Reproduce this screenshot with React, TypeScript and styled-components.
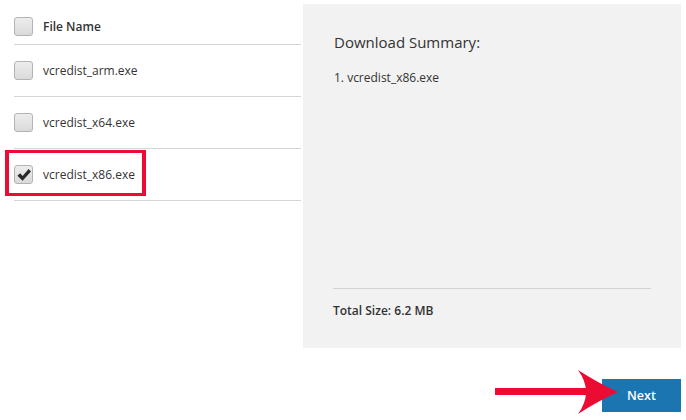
import styled, { createGlobalStyle } from "styled-components";

const GlobalStyle = createGlobalStyle`
    body {
        margin: 0;
        background: #ffffff;
        font-family: "Open Sans", "Noto Sans", sans-serif;
        color: #333333;
    }
`;

const Page = styled.div`
    width: 686px;
    height: 420px;
    box-sizing: border-box;
    padding: 4px 5px 0 14px;
    display: flex;
    flex-direction: column;
`;
const Top = styled.div`
    display: grid;
    grid-template-columns: 287px 378px;
    column-gap: 2px;
    height: 344px;
`;
const List = styled.div`
    display: flex;
    flex-direction: column;
    padding-top: 4px;
`;
const Row = styled.label<{ $header?: boolean }>`
    position: relative;
    display: flex;
    align-items: center;
    gap: 10px;
    height: ${(p) => (p.$header ? "36px" : "51px")};
    border-bottom: 1px solid #d6d6d6;
    font-size: 12px;
    font-weight: ${(p) => (p.$header ? 600 : 400)};
    color: #333333;
`;
const Box = styled.span`
    width: 19px;
    height: 19px;
    box-sizing: border-box;
    border: 1px solid #b3b3b3;
    border-radius: 3px;
    background: linear-gradient(#ededed, #dadada);
    display: flex;
    align-items: center;
    justify-content: center;
    svg {
        width: 16px;
        height: 16px;
    }
`;
const Highlight = styled.span`
    position: absolute;
    left: -9px;
    top: 1px;
    width: 141px;
    height: 46px;
    box-sizing: border-box;
    border: 4px solid #ec0b33;
    border-top-width: 3px;
    border-bottom-width: 3px;
    pointer-events: none;
`;
const Summary = styled.div`
    background: #f2f2f2;
    display: flex;
    flex-direction: column;
    padding: 27px 30px 29px 31px;
    box-sizing: border-box;
`;
const Title = styled.div`
    font-size: 15px;
    line-height: 22px;
`;
const Item = styled.div`
    font-size: 12px;
    margin-top: 16px;
`;
const Divider = styled.div`
    margin-top: auto;
    border-top: 1px solid #d4d4d4;
    margin-left: -1px;
`;
const Total = styled.div`
    font-size: 12px;
    font-weight: 600;
    margin-top: 13px;
    margin-left: -1px;
`;
const Footer = styled.div`
    position: relative;
    display: flex;
    justify-content: flex-end;
    margin-top: 31px;
`;
const NextButton = styled.button`
    width: 79px;
    height: 33px;
    border: none;
    background: #1a75b0;
    color: #ffffff;
    font-family: "Open Sans", "Noto Sans", sans-serif;
    font-size: 12.5px;
    font-weight: 600;
    cursor: pointer;
`;
const Arrow = styled.svg`
    position: absolute;
    right: 61px;
    top: -14px;
    width: 130px;
    height: 55px;
    pointer-events: none;
`;

const files = [
    { name: "vcredist_arm.exe", checked: false },
    { name: "vcredist_x64.exe", checked: false },
    { name: "vcredist_x86.exe", checked: true },
];

function Check({ on }: { on: boolean }) {
    return (
        <Box>
            {on ? (
                <svg viewBox="0 0 16 16">
                    <path d="M1.4 8.8 L4.2 6.2 L6.6 9 L12.6 2 L15 4.4 L6.6 13.8 Z" fill="#2a2a2a" />
                </svg>
            ) : null}
        </Box>
    );
}

export default function App() {
    return (
        <Page>
            <GlobalStyle />
            <Top>
                <List>
                    <Row $header>
                        <Check on={false} />
                        File Name
                    </Row>
                    {files.map((f) => (
                        <Row key={f.name}>
                            <Check on={f.checked} />
                            {f.name}
                            {f.checked ? <Highlight /> : null}
                        </Row>
                    ))}
                </List>
                <Summary>
                    <Title>Download Summary:</Title>
                    <Item>1. vcredist_x86.exe</Item>
                    <Divider />
                    <Total>Total Size: 6.2 MB</Total>
                </Summary>
            </Top>
            <Footer>
                <Arrow viewBox="0 0 130 55">
                    <rect x="5" y="23" width="92" height="7" fill="#ec0b33" />
                    <path d="M88 5 Q108 18 128 27 Q108 36 88 49 Q96 38 96 27 Q96 16 88 5 Z" fill="#ec0b33" />
                </Arrow>
                <NextButton>Next</NextButton>
            </Footer>
        </Page>
    );
}
